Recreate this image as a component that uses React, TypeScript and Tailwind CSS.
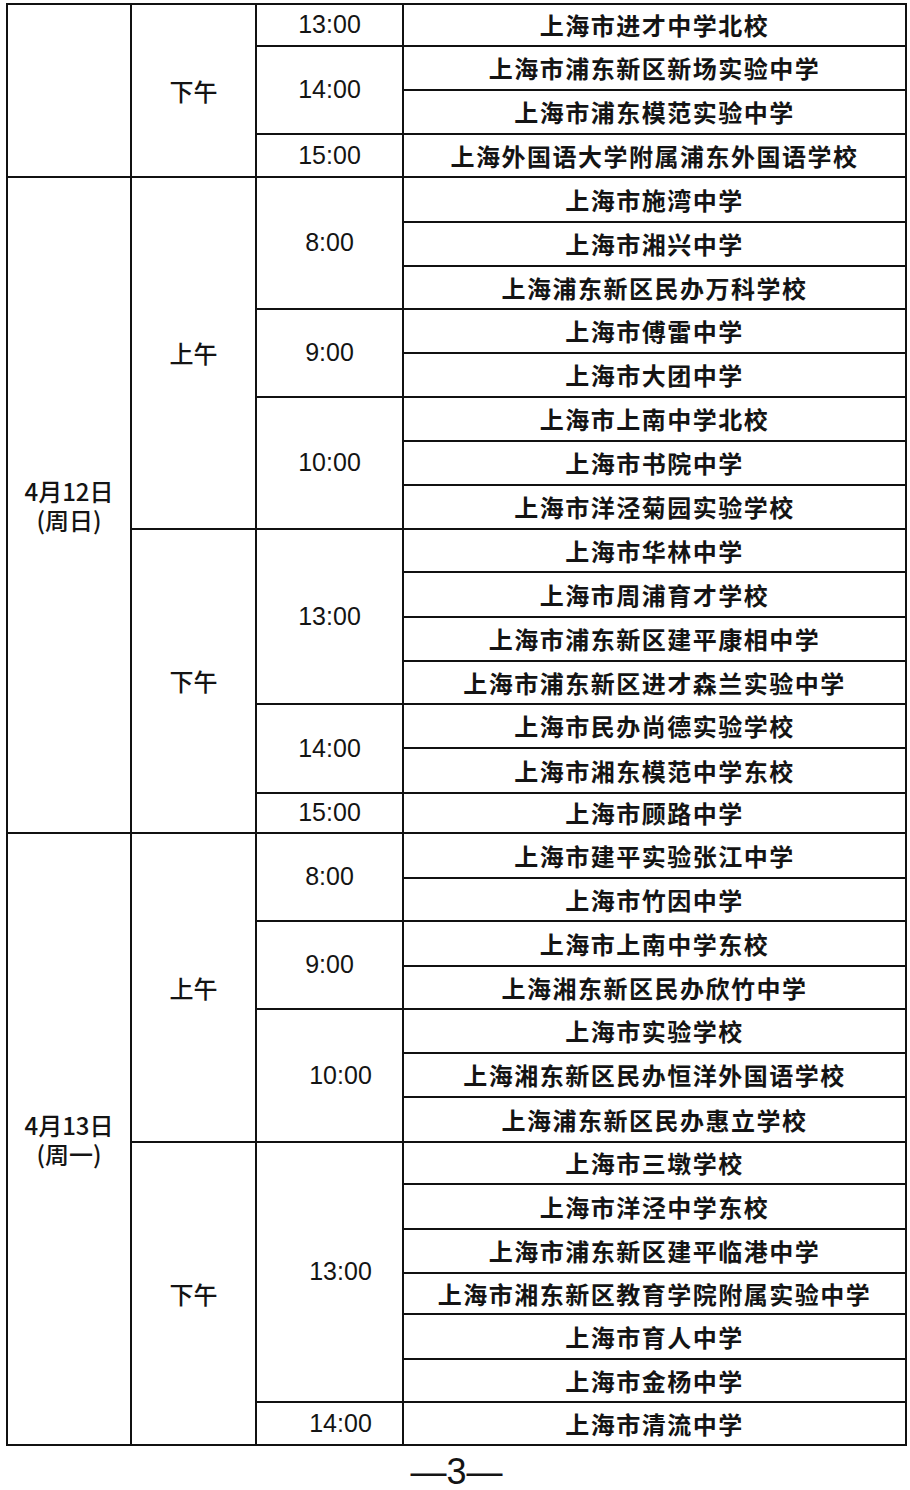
type Row = {
  date?: { lines: string[]; span: number };
  period?: { text: string; span: number };
  time?: { text: string; span: number; shift?: boolean };
  school: string;
};

const rows: Row[] = [
  // 续上页 4月11日 下午
  { date: { lines: [], span: 4 }, period: { text: '下午', span: 4 }, time: { text: '13:00', span: 1 }, school: '上海市进才中学北校' },
  { time: { text: '14:00', span: 2 }, school: '上海市浦东新区新场实验中学' },
  { school: '上海市浦东模范实验中学' },
  { time: { text: '15:00', span: 1 }, school: '上海外国语大学附属浦东外国语学校' },

  // 4月12日
  { date: { lines: ['4月12日', '(周日)'], span: 15 }, period: { text: '上午', span: 8 }, time: { text: '8:00', span: 3 }, school: '上海市施湾中学' },
  { school: '上海市湘兴中学' },
  { school: '上海浦东新区民办万科学校' },
  { time: { text: '9:00', span: 2 }, school: '上海市傅雷中学' },
  { school: '上海市大团中学' },
  { time: { text: '10:00', span: 3 }, school: '上海市上南中学北校' },
  { school: '上海市书院中学' },
  { school: '上海市洋泾菊园实验学校' },
  { period: { text: '下午', span: 7 }, time: { text: '13:00', span: 4 }, school: '上海市华林中学' },
  { school: '上海市周浦育才学校' },
  { school: '上海市浦东新区建平康相中学' },
  { school: '上海市浦东新区进才森兰实验中学' },
  { time: { text: '14:00', span: 2 }, school: '上海市民办尚德实验学校' },
  { school: '上海市湘东模范中学东校' },
  { time: { text: '15:00', span: 1 }, school: '上海市顾路中学' },

  // 4月13日
  { date: { lines: ['4月13日', '(周一)'], span: 14 }, period: { text: '上午', span: 7 }, time: { text: '8:00', span: 2 }, school: '上海市建平实验张江中学' },
  { school: '上海市竹因中学' },
  { time: { text: '9:00', span: 2 }, school: '上海市上南中学东校' },
  { school: '上海湘东新区民办欣竹中学' },
  { time: { text: '10:00', span: 3, shift: true }, school: '上海市实验学校' },
  { school: '上海湘东新区民办恒洋外国语学校' },
  { school: '上海浦东新区民办惠立学校' },
  { period: { text: '下午', span: 7 }, time: { text: '13:00', span: 6, shift: true }, school: '上海市三墩学校' },
  { school: '上海市洋泾中学东校' },
  { school: '上海市浦东新区建平临港中学' },
  { school: '上海市湘东新区教育学院附属实验中学' },
  { school: '上海市育人中学' },
  { school: '上海市金杨中学' },
  { time: { text: '14:00', span: 1, shift: true }, school: '上海市清流中学' },
];

const spanClass: Record<number, string> = {
  1: 'row-span-1',
  2: 'row-span-2',
  3: 'row-span-3',
  4: 'row-span-4',
  6: 'row-span-6',
  7: 'row-span-7',
  8: 'row-span-8',
  14: 'row-span-14',
  15: 'row-span-15',
};

export default function App() {
  return (
    <div className="w-[910px] min-h-[1490px] bg-white pt-[3px] pl-[6px] text-[#141414] font-['Noto_Sans_CJK_SC','Noto_Sans',sans-serif]">
      <div className="grid w-[901px] grid-cols-[122px_123px_145px_501px] grid-rows-[40px_42px_42px_41px_43px_42px_41px_42px_42px_42px_42px_42px_41px_43px_42px_41px_42px_43px_38px_43px_41px_43px_41px_42px_42px_43px_40px_43px_42px_39px_43px_41px_41px] gap-[2px] bg-[#111] p-[2px]">
        {rows.map((r, i) => (
          <>
            {r.date && (
              <div
                key={`d${i}`}
                className={`${spanClass[r.date.span]} flex flex-col items-center justify-center gap-[1px] bg-white text-[24px] font-medium leading-[28px]`}
              >
                {r.date.lines.map((l) => (
                  <span key={l}>{l}</span>
                ))}
              </div>
            )}
            {r.period && (
              <div
                key={`p${i}`}
                className={`${spanClass[r.period.span]} flex items-center justify-center bg-white text-[24px] font-medium`}
              >
                {r.period.text}
              </div>
            )}
            {r.time && (
              <div
                key={`t${i}`}
                className={`${spanClass[r.time.span]} flex items-center justify-center bg-white font-['Liberation_Sans',Arial,sans-serif] text-[25px] ${r.time.shift ? 'pl-[22px]' : ''}`}
              >
                {r.time.text}
              </div>
            )}
            <div
              key={`s${i}`}
              className="flex items-center justify-center bg-white text-[24px] font-bold tracking-[1.5px]"
            >
              {r.school}
            </div>
          </>
        ))}
      </div>
      <div className="mt-[8px] w-[901px] text-center font-['Liberation_Sans',Arial,sans-serif] text-[36px] leading-none">
        —3—
      </div>
    </div>
  );
}
